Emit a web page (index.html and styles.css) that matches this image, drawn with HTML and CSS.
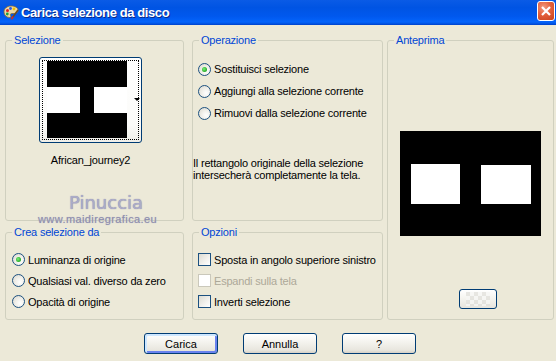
FILE: index.html
```html
<!DOCTYPE html>
<html lang="it">
<head>
<meta charset="utf-8">
<title>Carica selezione da disco</title>
<link rel="stylesheet" href="styles.css">
</head>
<body>
<div class="window">
  <div class="titlebar">
    <svg class="app-icon" width="16" height="16" viewBox="0 0 16 16">
      <path d="M8 2C4 2 1 4.5 1 8c0 3 2.5 5.5 5.5 5.5 1.3 0 1.5-1 1-2-.6-1 0-2 1.3-2H11c2.5 0 4-1.3 4-3.3C15 3.7 12 2 8 2z" fill="#e9d9a8" stroke="#8a6a30" stroke-width=".8"/>
      <circle cx="4.5" cy="6.5" r="1.5" fill="#e02020"/>
      <circle cx="7.5" cy="4.5" r="1.4" fill="#2a5ee8"/>
      <circle cx="11" cy="5" r="1.4" fill="#f0c000"/>
      <circle cx="4.3" cy="10" r="1.4" fill="#20a040"/>
      <path d="M15 6 9.5 13.5" stroke="#6a4a20" stroke-width="1.6"/>
      <path d="M10.2 12.5 8.3 15.2" stroke="#c03030" stroke-width="2"/>
    </svg>
    <span class="title">Carica selezione da disco</span>
    <div class="close">
      <svg width="10" height="10" viewBox="0 0 10 10"><path d="M1 1 9 9M9 1 1 9" stroke="#fff" stroke-width="2.2"/></svg>
    </div>
  </div>

  <div class="content">
    <div class="groups">
      <fieldset class="grp g-sel">
        <legend>Selezione</legend>
        <div class="sel-body">
          <div class="thumb">
            <div class="thumb-focus">
              <svg class="thumb-img" width="80" height="77" viewBox="0 0 80 77">
                <rect width="80" height="77" fill="#000"/>
                <rect x="0" y="26" width="33" height="26" fill="#fff"/>
                <rect x="47" y="26" width="33" height="26" fill="#fff"/>
              </svg>
            </div>
            <span class="thumb-arrow"></span>
          </div>
          <div class="thumb-name">African_journey2</div>
        </div>
      </fieldset>

      <fieldset class="grp g-op">
        <legend>Operazione</legend>
        <div class="op-list">
          <div class="opt"><span class="radio checked"></span><span>Sostituisci selezione</span></div>
          <div class="opt"><span class="radio"></span><span>Aggiungi alla selezione corrente</span></div>
          <div class="opt"><span class="radio"></span><span>Rimuovi dalla selezione corrente</span></div>
        </div>
        <p class="desc">Il rettangolo originale della selezione<br>intersecherà completamente la tela.</p>
      </fieldset>

      <fieldset class="grp g-prev">
        <legend>Anteprima</legend>
        <div class="prev-body">
          <svg class="prev-img" width="141" height="105" viewBox="0 0 141 105">
            <rect width="141" height="105" fill="#000"/>
            <rect x="11" y="33" width="49" height="40" fill="#fff"/>
            <rect x="81" y="34" width="50" height="39" fill="#fff"/>
          </svg>
          <div class="mini-btn"><span class="checker"></span></div>
        </div>
      </fieldset>

      <fieldset class="grp g-crea">
        <legend>Crea selezione da</legend>
        <div class="row-list">
          <div class="opt"><span class="radio checked"></span><span>Luminanza di origine</span></div>
          <div class="opt"><span class="radio"></span><span>Qualsiasi val. diverso da zero</span></div>
          <div class="opt"><span class="radio"></span><span>Opacità di origine</span></div>
        </div>
      </fieldset>

      <fieldset class="grp g-opz">
        <legend>Opzioni</legend>
        <div class="row-list">
          <div class="opt"><span class="check"></span><span>Sposta in angolo superiore sinistro</span></div>
          <div class="opt disabled"><span class="check"></span><span>Espandi sulla tela</span></div>
          <div class="opt"><span class="check"></span><span>Inverti selezione</span></div>
        </div>
      </fieldset>
    </div>

    <div class="buttons">
      <div class="btn default">Carica</div>
      <div class="btn">Annulla</div>
      <div class="btn">?</div>
    </div>
  </div>

  <div class="wm-name">Pinuccia</div>
  <div class="wm-url">www.maidiregrafica.eu</div>
</div>
</body>
</html>
```

FILE: styles.css
```css
html, body {
  margin: 0;
  padding: 0;
  background: #ECE9D8;
}

.window {
  position: relative;
  width: 556px;
  height: 361px;
  overflow: hidden;
  background: #ECE9D8;
  font-family: "Liberation Sans", Arial, sans-serif;
  font-size: 11px;
  letter-spacing: -0.2px;
  color: #000;
}

/* ---------- title bar ---------- */
.titlebar {
  position: relative;
  height: 25px;
  display: flex;
  align-items: center;
  background: linear-gradient(to bottom, #0a5be6 0%, #0054e3 30%, #0058ee 65%, #0464fb 88%, #0050de 96%, #003fc8 100%);
}

.app-icon {
  margin-left: 3px;
  margin-top: -1px;
  flex: none;
}

.title {
  margin-left: 2px;
  color: #fff;
  font-weight: bold;
  font-size: 13px;
  letter-spacing: -0.4px;
  text-shadow: 1px 1px 0 #0b2a8a;
  margin-top: -1px;
}

.close {
  position: absolute;
  left: 537px;
  top: 1px;
  width: 18px;
  height: 20px;
  box-sizing: border-box;
  border: 1px solid #fff;
  border-radius: 3px;
  background: radial-gradient(circle at 35% 30%, #f19a80 0%, #e3603c 45%, #c8401c 100%);
  display: flex;
  align-items: center;
  justify-content: center;
}

/* ---------- content ---------- */
.content {
  padding: 9px 0 0 5px;
}

.groups {
  display: grid;
  grid-template-columns: 179px 8px 191px 4px 167px;
  grid-template-rows: 187px 94px;
  row-gap: 5px;
}

.grp {
  margin: 0;
  padding: 0;
  min-width: 0;
  border: 1px solid #D0D0BF;
  border-radius: 3px;
}

.grp legend {
  margin-left: 6px;
  padding: 0 2px;
  line-height: 13px;
  color: #0046D5;
}

.g-sel  { grid-column: 1; grid-row: 1; }
.g-op   { grid-column: 3; grid-row: 1; }
.g-prev { grid-column: 5; grid-row: 1 / span 2; }
.g-crea { grid-column: 1; grid-row: 2; }
.g-opz  { grid-column: 3; grid-row: 2; }

/* Selezione */
.sel-body {
  display: flex;
  flex-direction: column;
  align-items: center;
  padding: 10px 8px 0 0;
}

.thumb {
  position: relative;
  width: 103px;
  height: 86px;
  box-sizing: border-box;
  border: 1px solid #003C74;
  border-radius: 3px;
  background: linear-gradient(#fff, #fbfbf9 80%, #efeee8);
  padding: 2px;
}

.thumb-focus {
  height: 100%;
  box-sizing: border-box;
  border: 1px dotted #000;
  padding: 0 0 0 4px;
}

.thumb-img {
  display: block;
}

.thumb-arrow {
  position: absolute;
  left: 94px;
  top: 40px;
  width: 0;
  height: 0;
  border-left: 3px solid transparent;
  border-right: 3px solid transparent;
  border-top: 3px solid #000;
}

.thumb-name {
  margin-top: 11px;
  line-height: 13px;
}

/* Operazione */
.op-list {
  padding: 11px 0 0 5px;
}

.opt {
  display: flex;
  align-items: center;
  height: 22px;
  gap: 3px;
}

.row-list .opt {
  height: 21px;
}

.row-list {
  padding: 10px 0 0 6px;
}

.g-opz .row-list {
  padding-left: 5px;
}

.desc {
  margin: 33px 0 0 0;
  line-height: 12px;
}

.radio {
  flex: none;
  position: relative;
  width: 13px;
  height: 13px;
  box-sizing: border-box;
  border: 1px solid #1C5180;
  border-radius: 50%;
  background: radial-gradient(circle at 65% 65%, #fff 0%, #f2f1ec 40%, #d8d6cb 100%);
}

.radio.checked::after {
  content: "";
  position: absolute;
  left: 3px;
  top: 3px;
  width: 5px;
  height: 5px;
  border-radius: 50%;
  background: radial-gradient(circle at 40% 40%, #7cf07c 0%, #2fb42f 60%, #1a8a1a 100%);
}

.check {
  flex: none;
  width: 13px;
  height: 13px;
  box-sizing: border-box;
  border: 1px solid #1C5180;
  background: linear-gradient(135deg, #dcdbd2 0%, #f3f2ee 60%, #fff 100%);
}

.opt.disabled {
  color: #ACA899;
}

.opt.disabled .check {
  border-color: #CAC8BB;
  background: #fff;
}

/* Anteprima */
.prev-body {
  display: flex;
  flex-direction: column;
  align-items: center;
  padding-top: 84px;
}

.prev-img {
  display: block;
}

.mini-btn {
  margin-top: 53px;
  margin-left: 15px;
  width: 38px;
  height: 20px;
  box-sizing: border-box;
  border: 1px solid #003C74;
  border-radius: 3px;
  background: linear-gradient(#fff, #f4f3ee 50%, #e6e4dc);
  display: flex;
  align-items: center;
  justify-content: center;
}

.checker {
  width: 24px;
  height: 14px;
  background: repeating-conic-gradient(#f6f6f4 0 25%, #e2e1dc 0 50%) 0 0 / 8px 8px;
  opacity: .8;
}

/* Buttons */
.buttons {
  display: flex;
  gap: 25px;
  margin: 13px 0 0 139px;
}

.btn {
  width: 74px;
  height: 21px;
  box-sizing: border-box;
  border: 1px solid #003C74;
  border-radius: 3px;
  background: linear-gradient(#fff 0%, #f5f4ef 40%, #e8e6de 85%, #d6d0c5 100%);
  display: flex;
  align-items: center;
  justify-content: center;
  letter-spacing: 0;
}

.btn.default {
  box-shadow: inset 1px 1px 0 1px #cee7ff, inset -1px -1px 0 1px #6982ee;
}

/* Watermark */
.wm-name {
  position: absolute;
  left: 69px;
  top: 194px;
  line-height: 18px;
  font-family: "DejaVu Sans", sans-serif;
  font-size: 18px;
  letter-spacing: 0;
  color: #acacc8;
  text-shadow: 0 0 1px #7a7aa2;
}

.wm-url {
  position: absolute;
  left: 38px;
  top: 214px;
  line-height: 11px;
  font-family: "Liberation Sans", sans-serif;
  font-size: 11px;
  letter-spacing: 0.4px;
  color: #8e8eac;
  text-shadow: 0 0 1px #b0b0c8;
}
```
